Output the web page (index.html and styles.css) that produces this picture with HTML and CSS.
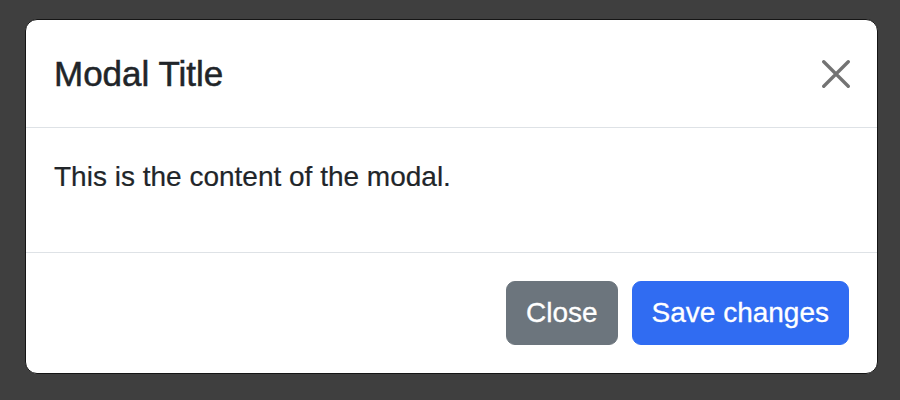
FILE: index.html
```html
<html>
<head>
<title>Modal</title>
<meta http-equiv="Content-Type" content="text/html; charset=UTF-8" />
<link rel="stylesheet" href="styles.css">
</head>
<body>

<div class="Backdrop">
  <div class="Modal">
    <div class="ModalHeader">
      <h5 class="ModalTitle">Modal Title</h5>
      <button class="BtnClose" aria-label="Close">
        <svg viewBox="0 0 16 16" width="28" height="28">
          <path d="M1 1L15 15M15 1L1 15" stroke="currentColor" stroke-width="1.9" stroke-linecap="round" fill="none"/>
        </svg>
      </button>
    </div>
    <div class="ModalBody">
      <p>This is the content of the modal.</p>
    </div>
    <div class="ModalFooter">
      <button class="Btn BtnSecondary">Close</button>
      <button class="Btn BtnPrimary">Save changes</button>
    </div>
  </div>
</div>

</body>
</html>
```

FILE: styles.css
```css
*{
   box-sizing: border-box;
}
body{
   margin: 0;
   background: #3f3f3f;
   font-family: "Liberation Sans", Arial, sans-serif;
   color: #212529;
   -webkit-font-smoothing: antialiased;
}
.Backdrop{
   padding: 19px 0 0 25px;
}
.Modal{
   width: 853px;
   height: 355px;
   background: #fff;
   border: 1px solid #151515;
   border-radius: 12px;
   display: flex;
   flex-direction: column;
   overflow: hidden;
}
.ModalHeader{
   height: 108px;
   flex: none;
   display: flex;
   align-items: center;
   justify-content: space-between;
   padding: 0 27px 0 28px;
   border-bottom: 1px solid #dee2e6;
}
.ModalTitle{
   margin: 0;
   font-size: 35px;
   font-weight: 500;
   line-height: 1.2;
   color: #212529;
   -webkit-text-stroke: 0.5px #212529;
}
.BtnClose{
   border: 0;
   background: transparent;
   padding: 0;
   width: 28px;
   height: 28px;
   color: #737373;
   display: flex;
   cursor: pointer;
}
.ModalBody{
   height: 125px;
   flex: none;
   padding: 28px 28px 0;
   border-bottom: 1px solid #dee2e6;
}
.ModalBody p{
   margin: 0;
   font-size: 28px;
   line-height: 42px;
   -webkit-text-stroke: 0.2px #212529;
}
.ModalFooter{
   flex: 1;
   display: flex;
   align-items: center;
   justify-content: flex-end;
   gap: 14px;
   padding: 0 28px 0 28px;
}
.Btn{
   height: 64px;
   border: 1px solid transparent;
   border-radius: 9px;
   padding: 0 19px;
   font-family: "Liberation Sans", Arial, sans-serif;
   font-size: 28px;
   line-height: 1.5;
   color: #fff;
   -webkit-text-stroke: 0.3px #fff;
   cursor: pointer;
}
.BtnSecondary{
   background: #6c757d;
   border-color: #6c757d;
}
.BtnPrimary{
   background: #306cf2;
   border-color: #306cf2;
}
```
